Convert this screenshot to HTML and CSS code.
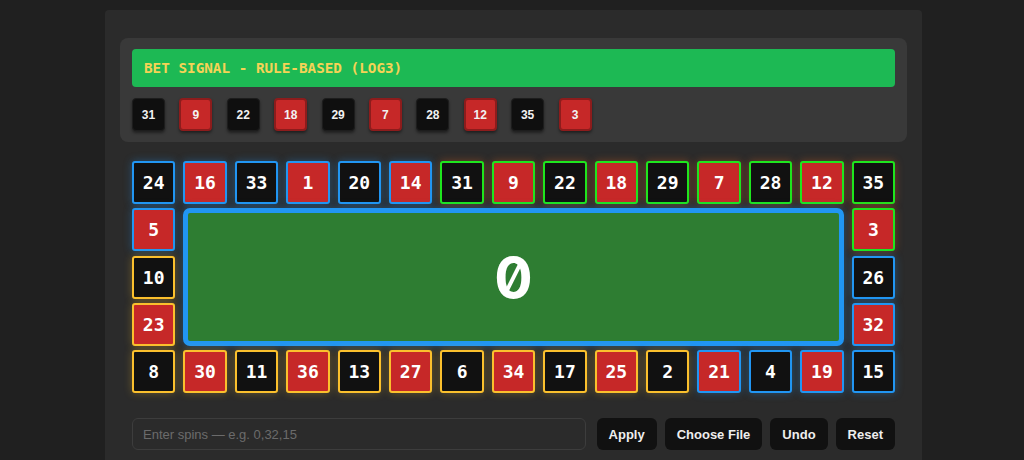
FILE: index.html
```html
<!DOCTYPE html>
<html>
<head>
<meta charset="utf-8">
<link rel="stylesheet" href="styles.css">
</head>
<body>
<div class="app">
  <section class="panel">
    <div class="signal">BET SIGNAL - RULE-BASED (LOG3)</div>
    <div class="chips">
      <span class="chip black">31</span>
      <span class="chip red">9</span>
      <span class="chip black">22</span>
      <span class="chip red">18</span>
      <span class="chip black">29</span>
      <span class="chip red">7</span>
      <span class="chip black">28</span>
      <span class="chip red">12</span>
      <span class="chip black">35</span>
      <span class="chip red">3</span>
    </div>
  </section>

  <div class="board">
    <div class="cell black blue">24</div>
    <div class="cell red blue">16</div>
    <div class="cell black blue">33</div>
    <div class="cell red blue">1</div>
    <div class="cell black blue">20</div>
    <div class="cell red blue">14</div>
    <div class="cell black green">31</div>
    <div class="cell red green">9</div>
    <div class="cell black green">22</div>
    <div class="cell red green">18</div>
    <div class="cell black green">29</div>
    <div class="cell red green">7</div>
    <div class="cell black green">28</div>
    <div class="cell red green">12</div>
    <div class="cell black green">35</div>

    <div class="cell red blue">5</div>
    <div class="zero">0</div>
    <div class="cell red green">3</div>

    <div class="cell black yellow">10</div>
    <div class="cell black blue">26</div>

    <div class="cell red yellow">23</div>
    <div class="cell red blue">32</div>

    <div class="cell black yellow">8</div>
    <div class="cell red yellow">30</div>
    <div class="cell black yellow">11</div>
    <div class="cell red yellow">36</div>
    <div class="cell black yellow">13</div>
    <div class="cell red yellow">27</div>
    <div class="cell black yellow">6</div>
    <div class="cell red yellow">34</div>
    <div class="cell black yellow">17</div>
    <div class="cell red yellow">25</div>
    <div class="cell black yellow">2</div>
    <div class="cell red blue">21</div>
    <div class="cell black blue">4</div>
    <div class="cell red blue">19</div>
    <div class="cell black blue">15</div>
  </div>

  <div class="controls">
    <input class="spins" type="text" placeholder="Enter spins — e.g. 0,32,15">
    <button class="btn">Apply</button>
    <button class="btn">Choose File</button>
    <button class="btn">Undo</button>
    <button class="btn">Reset</button>
  </div>
</div>
</body>
</html>
```

FILE: styles.css
```css
html, body {
  margin: 0;
  padding: 0;
  background: #202020;
  overflow: hidden;
}

body {
  font-family: "Liberation Sans", Arial, sans-serif;
}

.app {
  width: 817px;
  margin: 10px 0 0 105px;
  background: #2b2b2b;
  border-radius: 4px;
  padding: 28px 15px 40px;
  box-sizing: border-box;
  min-height: 500px;
}

.panel {
  background: #393939;
  border-radius: 8px;
  padding: 11px 12px 11px;
}

.signal {
  height: 38px;
  background: #1db954;
  border-radius: 4px;
  color: #f5d356;
  font-family: "DejaVu Sans Mono", monospace;
  font-weight: bold;
  font-size: 14.3px;
  line-height: 38px;
  padding-left: 12px;
}

.chips {
  display: flex;
  gap: 14.4px;
  margin-top: 11px;
}

.chip {
  width: 33px;
  height: 33px;
  box-sizing: border-box;
  border-radius: 4px;
  display: flex;
  align-items: center;
  justify-content: center;
  font-family: "Liberation Sans", Arial, sans-serif;
  font-weight: bold;
  font-size: 12px;
  color: #f2f2f2;
  box-shadow: 0 2px 3px rgba(0, 0, 0, 0.45);
}

.chip.black {
  background: #0f0f0f;
  border: 1px solid #1d1d1d;
}

.chip.red {
  background: #c62828;
  border: 2px solid #8d1c1c;
}

.board {
  display: grid;
  grid-template-columns: repeat(15, 1fr);
  grid-template-rows: repeat(5, 43px);
  column-gap: 8px;
  row-gap: 4.25px;
  margin: 19px 12px 0;
}

.cell {
  box-sizing: border-box;
  border-radius: 3px;
  border: 2px solid;
  display: flex;
  align-items: center;
  justify-content: center;
  font-family: "DejaVu Sans Mono", monospace;
  font-weight: bold;
  font-size: 18px;
  color: #ffffff;
}

.cell.black { background: #111111; }
.cell.red { background: #c62828; }

.cell.blue {
  border-color: #2196f3;
  box-shadow: 0 0 8px rgba(33, 150, 243, 0.35);
}

.cell.yellow {
  border-color: #fbc02d;
  box-shadow: 0 0 8px rgba(251, 192, 45, 0.3);
}

.cell.green {
  border-color: #1ee61e;
  box-shadow: 0 0 8px rgba(255, 110, 30, 0.35);
}

.zero {
  grid-column: 2 / 15;
  grid-row: 2 / 5;
  background: #2e7d32;
  border: 5px solid #2196f3;
  border-radius: 7px;
  box-shadow: 0 0 8px rgba(33, 150, 243, 0.35);
  display: flex;
  align-items: center;
  justify-content: center;
  font-family: Inter, sans-serif;
  font-feature-settings: "zero" 1;
  font-weight: 700;
  font-size: 57px;
  color: #ffffff;
}

.controls {
  display: flex;
  gap: 8px;
  margin: 25px 12px 0;
}

.spins {
  flex: 1;
  height: 32px;
  box-sizing: border-box;
  margin: 0 3px 0 0;
  background: #2b2b2b;
  border: 1px solid #3d3d3d;
  border-radius: 6px;
  padding: 0 10px;
  font-family: "Liberation Sans", Arial, sans-serif;
  font-size: 13px;
  color: #dddddd;
  outline: none;
}

.spins::placeholder {
  color: #6b6b6b;
}

.btn {
  height: 32px;
  padding: 0 12px;
  background: #111111;
  color: #eeeeee;
  border: none;
  border-radius: 6px;
  font-family: "Liberation Sans", Arial, sans-serif;
  font-weight: bold;
  font-size: 13px;
}
```
